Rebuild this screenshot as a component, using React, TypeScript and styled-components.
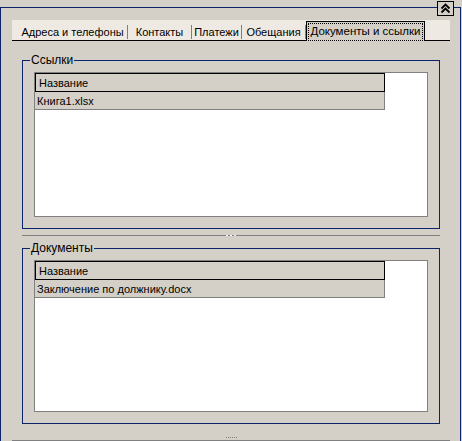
import React from "react";
import styled, { createGlobalStyle } from "styled-components";

const NAVY = "#0a246a";
const FACE = "#d4d0c8";
const SHADOW = "#808080";

const Global = createGlobalStyle`
  html, body { margin: 0; padding: 0; background: ${FACE}; overflow: hidden; }
  body { width: 462px; height: 441px; font-family: "Liberation Sans", Arial, sans-serif; color: #000; }
`;

const Page = styled.div`
  width: 462px;
  height: 441px;
  padding-top: 7px;
  box-sizing: border-box;
  overflow: hidden;
`;

const Frame = styled.div`
  position: relative;
  width: 461px;
  box-sizing: border-box;
  border: 1px solid ${NAVY};
  border-bottom: none;
  padding: 12px 10px 0 11px;
`;

const CollapseButton = styled.button`
  position: absolute;
  left: 436px;
  top: -7px;
  width: 17px;
  height: 15px;
  box-sizing: border-box;
  border: 1px solid #000;
  background: ${FACE};
  padding: 0;
  margin: 0;
  display: flex;
  align-items: center;
  justify-content: center;
`;

const TabStrip = styled.div`
  display: flex;
  align-items: flex-end;
  height: 21px;
  box-sizing: border-box;
  background: #eeeae3;
  border-bottom: 1px solid #000;
  padding-left: 6px;
`;

const Tab = styled.div<{ $w: number }>`
  width: ${(p) => p.$w}px;
  height: 20px;
  box-sizing: border-box;
  padding-top: 5px;
  line-height: 15px;
  font-size: 11px;
  text-align: center;
  white-space: nowrap;
`;

const TabSep = styled.div`
  width: 1px;
  height: 14px;
  margin-bottom: 1px;
  background: ${SHADOW};
`;

const ActiveTab = styled.div`
  width: 119px;
  height: 20px;
  box-sizing: border-box;
  border: 1px solid #000;
  border-bottom: none;
  background: ${FACE};
  margin-bottom: -1px;
  padding: 1px 1px 0;
`;

const FocusRect = styled.div`
  height: 100%;
  box-sizing: border-box;
  border: 1px dotted #000;
  line-height: 15px;
  font-size: 11.5px;
  text-align: center;
  white-space: nowrap;
`;

const Panel = styled.div`
  display: flex;
  flex-direction: column;
  padding: 19px 10px 0 10px;
  border-bottom: 1px solid ${SHADOW};
`;

const GroupBox = styled.div<{ $h: number }>`
  position: relative;
  height: ${(p) => p.$h}px;
  box-sizing: border-box;
  border: 1px solid ${NAVY};
  padding: 11px;
`;

const Caption = styled.span`
  position: absolute;
  top: -8px;
  left: 7px;
  padding: 0 1px;
  background: ${FACE};
  font-size: 12px;
  line-height: 14px;
  white-space: nowrap;
`;

const ListView = styled.div`
  height: 100%;
  box-sizing: border-box;
  background: #fff;
  border: 1px solid ${SHADOW};
  display: flex;
  flex-direction: column;
`;

const HeaderCell = styled.div`
  width: 350px;
  height: 19px;
  box-sizing: border-box;
  border: 1px solid #000;
  background: ${FACE};
  padding: 1px 0 0 3px;
  font-size: 11px;
  line-height: 16px;
  white-space: nowrap;
`;

const Row = styled.div`
  width: 350px;
  height: 18px;
  box-sizing: border-box;
  background: ${FACE};
  border-right: 1px solid ${SHADOW};
  border-bottom: 1px solid ${SHADOW};
  padding: 2px 0 0 2px;
  font-size: 11px;
  line-height: 15px;
  white-space: nowrap;
`;

const Splitter = styled.div`
  height: 19px;
  box-sizing: border-box;
  padding-top: 6px;
  display: flex;
  align-items: flex-start;
`;

const SplitLine = styled.div`
  flex: 1;
  height: 1px;
  background: ${SHADOW};
`;

const Grip = styled.div`
  width: 10px;
  height: 1px;
  background: repeating-linear-gradient(90deg, #f4f4f4 0 2px, ${SHADOW} 2px 4px);
`;

const Footer = styled.div`
  height: 16px;
  display: flex;
  align-items: flex-end;
  justify-content: center;
`;

const FooterGrip = styled.div`
  width: 11px;
  height: 1px;
  margin-bottom: 2px;
  background: repeating-linear-gradient(90deg, ${SHADOW} 0 1px, transparent 1px 2px);
`;

const ChevronIcon = () => (
  <svg width="15" height="13" viewBox="0 0 15 13">
    <polyline points="3.5,6.5 7.5,2.5 11.5,6.5" fill="none" stroke="#000" strokeWidth="1.8" />
    <polyline points="3.5,10.5 7.5,6.5 11.5,10.5" fill="none" stroke="#000" strokeWidth="1.8" />
  </svg>
);

const tabs = [
  { label: "Адреса и телефоны", w: 109 },
  { label: "Контакты", w: 63 },
  { label: "Платежи", w: 49 },
  { label: "Обещания", w: 63 },
];

export default function App() {
  return (
    <>
      <Global />
      <Page>
        <Frame>
          <CollapseButton aria-label="Свернуть">
            <ChevronIcon />
          </CollapseButton>
          <TabStrip>
            {tabs.map((t) => (
              <React.Fragment key={t.label}>
                <Tab $w={t.w}>{t.label}</Tab>
                <TabSep />
              </React.Fragment>
            ))}
            <ActiveTab>
              <FocusRect>Документы и ссылки</FocusRect>
            </ActiveTab>
          </TabStrip>
          <Panel>
            <GroupBox $h={169}>
              <Caption>Ссылки</Caption>
              <ListView>
                <HeaderCell>Название</HeaderCell>
                <Row>Книга1.xlsx</Row>
              </ListView>
            </GroupBox>
            <Splitter>
              <SplitLine />
              <Grip />
              <SplitLine />
            </Splitter>
            <GroupBox $h={176}>
              <Caption>Документы</Caption>
              <ListView>
                <HeaderCell>Название</HeaderCell>
                <Row>Заключение по должнику.docx</Row>
              </ListView>
            </GroupBox>
            <Footer>
              <FooterGrip />
            </Footer>
          </Panel>
        </Frame>
      </Page>
    </>
  );
}
